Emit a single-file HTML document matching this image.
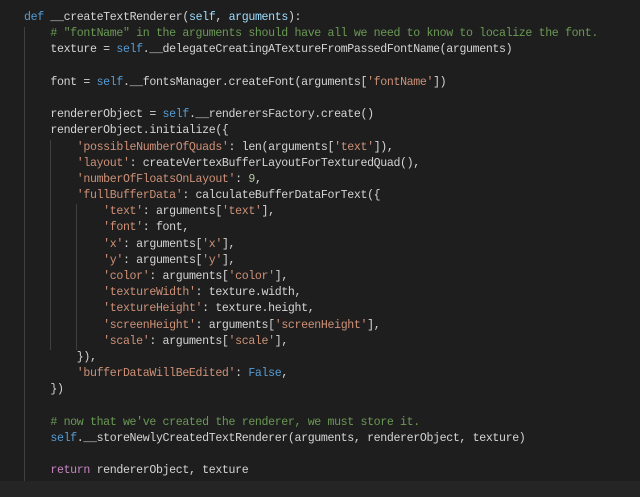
<!DOCTYPE html>
<html><head><meta charset="utf-8"><style>
html,body{margin:0;padding:0;background:#1e1e1e;width:640px;height:497px;overflow:hidden}
#code{position:absolute;left:24px;top:10px;font-family:"Liberation Mono",monospace;font-size:11.6px;letter-spacing:-0.36px;line-height:16.18px;color:#d4d4d4;white-space:pre}
.k{color:#569cd6}.f{color:#d4d4d4}.p{color:#9cdcfe}.s{color:#ce9178}.c{color:#6a9955}.r{color:#c586c0}.n{color:#b5cea8}
.g{position:absolute;width:1px;background:#404040}
#bar{position:absolute;left:0;top:481px;width:640px;height:16px;background:#252526}
</style></head><body>
<div class="g" style="left:24px;top:27px;height:454px"></div>
<div class="g" style="left:50px;top:140px;height:210px"></div>
<div class="g" style="left:76px;top:204px;height:146px"></div>
<div id="bar"></div>
<div id="code"><span class="k">def</span> <span class="f">__createTextRenderer</span>(<span class="p">self</span>, <span class="p">arguments</span>):
    <span class="c"># "fontName" in the arguments should have all we need to know to localize the font.</span>
    texture = <span class="k">self</span>.__delegateCreatingATextureFromPassedFontName(arguments)

    font = <span class="k">self</span>.__fontsManager.createFont(arguments[<span class="s">'fontName'</span>])

    rendererObject = <span class="k">self</span>.__renderersFactory.create()
    rendererObject.initialize({
        <span class="s">'possibleNumberOfQuads'</span>: len(arguments[<span class="s">'text'</span>]),
        <span class="s">'layout'</span>: createVertexBufferLayoutForTexturedQuad(),
        <span class="s">'numberOfFloatsOnLayout'</span>: <span class="n">9</span>,
        <span class="s">'fullBufferData'</span>: calculateBufferDataForText({
            <span class="s">'text'</span>: arguments[<span class="s">'text'</span>],
            <span class="s">'font'</span>: font,
            <span class="s">'x'</span>: arguments[<span class="s">'x'</span>],
            <span class="s">'y'</span>: arguments[<span class="s">'y'</span>],
            <span class="s">'color'</span>: arguments[<span class="s">'color'</span>],
            <span class="s">'textureWidth'</span>: texture.width,
            <span class="s">'textureHeight'</span>: texture.height,
            <span class="s">'screenHeight'</span>: arguments[<span class="s">'screenHeight'</span>],
            <span class="s">'scale'</span>: arguments[<span class="s">'scale'</span>],
        }),
        <span class="s">'bufferDataWillBeEdited'</span>: <span class="k">False</span>,
    })

    <span class="c"># now that we've created the renderer, we must store it.</span>
    <span class="k">self</span>.__storeNewlyCreatedTextRenderer(arguments, rendererObject, texture)

    <span class="r">return</span> rendererObject, texture</div>
</body></html>
